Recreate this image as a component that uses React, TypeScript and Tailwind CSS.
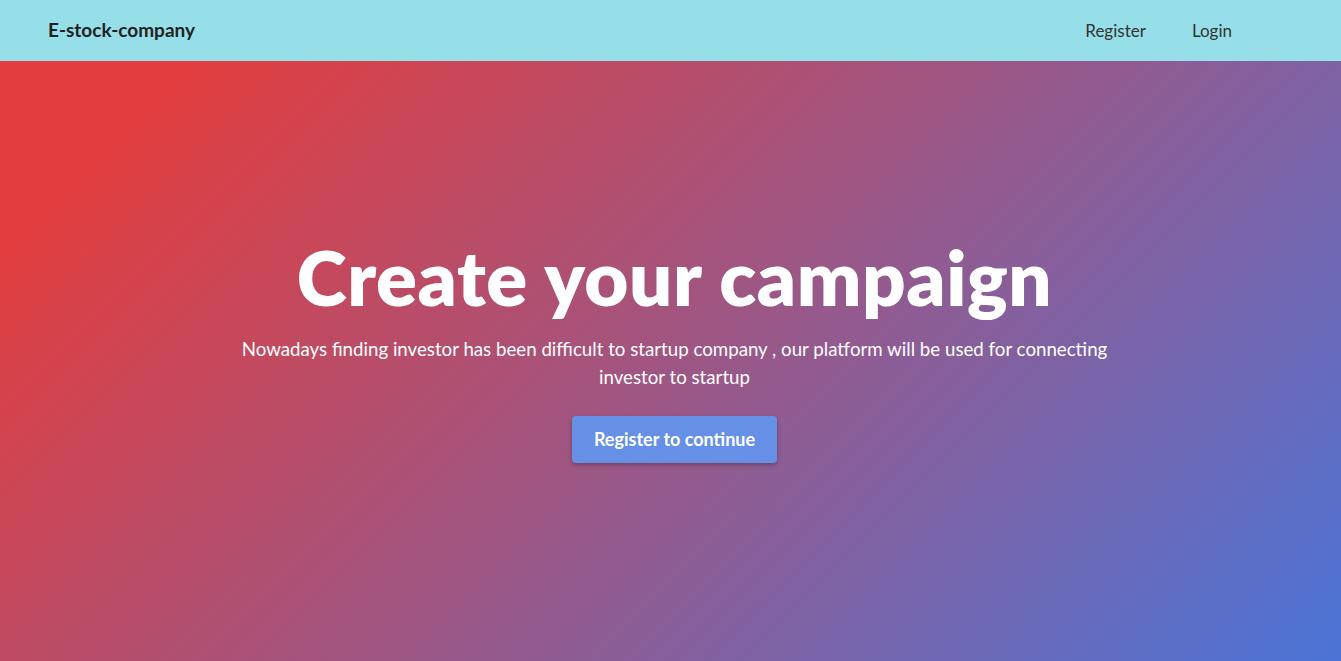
export default function App() {
  return (
    <div className="flex h-[661px] flex-col overflow-hidden font-['Lato',sans-serif]">
      {/* Navbar */}
      <nav className="flex h-[61px] shrink-0 items-center justify-between bg-[#97dfe8] pl-12 pr-[109px]">
        <span className="text-[19px] font-bold text-[#222]">E-stock-company</span>
        <div className="flex items-center gap-[46px] text-[17px] text-[#333]">
          <a href="#">Register</a>
          <a href="#">Login</a>
        </div>
      </nav>

      {/* Hero */}
      <section className="flex flex-1 flex-col items-center justify-center bg-[linear-gradient(135deg,#e23e3f_10%,#4b74d7_100%)] pb-[28px] pl-2 text-center text-white">
        <h1 className="text-[76px] font-extrabold leading-[1.2] tracking-[0.6px]">Create your campaign</h1>
        <p className="mt-[12px] max-w-[890px] text-[18.7px] leading-[28px]">
          Nowadays finding investor has been difficult to startup company , our platform will be used for connecting
          investor to startup
        </p>
        <button className="mt-[25px] h-[47px] w-[205px] rounded-[4px] bg-[#6690e6] text-[18px] font-bold text-white shadow-[0_2px_4px_rgba(0,0,0,0.25)]">
          Register to continue
        </button>
      </section>
    </div>
  );
}
